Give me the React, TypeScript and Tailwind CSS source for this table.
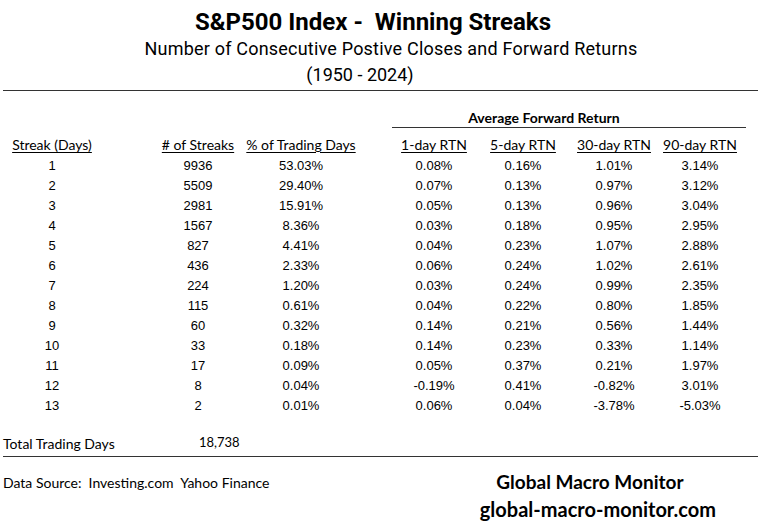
import React from 'react';

type Row = [string, string, string, string, string, string, string];

const rows: Row[] = [
  ['1', '9936', '53.03%', '0.08%', '0.16%', '1.01%', '3.14%'],
  ['2', '5509', '29.40%', '0.07%', '0.13%', '0.97%', '3.12%'],
  ['3', '2981', '15.91%', '0.05%', '0.13%', '0.96%', '3.04%'],
  ['4', '1567', '8.36%', '0.03%', '0.18%', '0.95%', '2.95%'],
  ['5', '827', '4.41%', '0.04%', '0.23%', '1.07%', '2.88%'],
  ['6', '436', '2.33%', '0.06%', '0.24%', '1.02%', '2.61%'],
  ['7', '224', '1.20%', '0.03%', '0.24%', '0.99%', '2.35%'],
  ['8', '115', '0.61%', '0.04%', '0.22%', '0.80%', '1.85%'],
  ['9', '60', '0.32%', '0.14%', '0.21%', '0.56%', '1.44%'],
  ['10', '33', '0.18%', '0.14%', '0.23%', '0.33%', '1.14%'],
  ['11', '17', '0.09%', '0.05%', '0.37%', '0.21%', '1.97%'],
  ['12', '8', '0.04%', '-0.19%', '0.41%', '-0.82%', '3.01%'],
  ['13', '2', '0.01%', '0.06%', '0.04%', '-3.78%', '-5.03%'],
];

const headers = [
  'Streak (Days)',
  '# of Streaks',
  '% of Trading Days',
  '1-day RTN',
  '5-day RTN',
  '30-day RTN',
  '90-day RTN',
];

// fixed widths so each column's centre lands where the sheet has it
const cellCls = [
  'w-[104px]',
  'ml-[46px] w-[96px]',
  'w-[110px]',
  'ml-[36px] w-[84px]',
  'w-[94px]',
  'w-[88px]',
  'w-[84px]',
];

const sans = "font-['Lato','Open_Sans',sans-serif]";
const arial = "font-['Liberation_Sans',Arial,sans-serif]";

function TableRow({ cells, header }: { cells: string[]; header?: boolean }) {
  return (
    <div className="flex h-[20px] items-center">
      {cells.map((c, i) => (
        <div key={i} className={`${cellCls[i]} text-center`}>
          {header ? (
            <span className={`${sans} text-[14px] underline underline-offset-2`}>{c}</span>
          ) : (
            <span className={`${arial} text-[13px]`}>{c}</span>
          )}
        </div>
      ))}
    </div>
  );
}

export default function App() {
  return (
    <div className="h-[524px] w-[774px] overflow-hidden bg-white text-black">
      <div className="pt-[7px]">
        <div className="pr-[28px] text-center font-['Roboto',sans-serif] text-[24px] font-bold leading-[30px]">
          S&amp;P500 Index -&nbsp; Winning Streaks
        </div>
        <div className="mt-[-1px] pl-[8px] text-center font-['Roboto',sans-serif] text-[18px] leading-[26px] tracking-[0.2px]">
          Number of Consecutive Postive Closes and Forward Returns
        </div>
        <div className="pr-[54px] text-center font-['Roboto',sans-serif] text-[18px] leading-[26px]">
          (1950 - 2024)
        </div>
      </div>

      <div className="mx-[3px] mt-[2px] w-[755px] border-t border-[#333]" />

      <div className="ml-[392px] mt-[17px] w-[354px]">
        <div className={`${sans} pr-[50px] text-center text-[14px] font-bold leading-[19px]`}>
          Average Forward Return
        </div>
        <div className="border-t border-[#333]" />
      </div>

      <div className="mt-[6px]">
        <TableRow cells={headers} header />
        {rows.map((r) => (
          <TableRow key={r[0]} cells={r} />
        ))}
      </div>

      <div className={`${sans} mt-[18px] flex h-[22px] items-center text-[14px]`}>
        <span className="ml-[3px] w-[196px]">Total Trading Days</span>
        <span className="text-[13px]">18,738</span>
      </div>

      <div className="mx-[3px] mt-[2px] w-[755px] border-t border-[#333]" />

      <div className="flex">
        <div className={`${sans} ml-[3px] mt-[15px] text-[14px] leading-[22px]`}>
          Data Source:&nbsp; Investing.com&nbsp; Yahoo Finance
        </div>
        <div className={`${sans} ml-auto mr-[58px] mt-[12px] flex flex-col items-center font-bold`}>
          <div className="pr-[16px] text-[19px] leading-[26px]">Global Macro Monitor</div>
          <div className="text-[20px] leading-[28px]">global-macro-monitor.com</div>
        </div>
      </div>
    </div>
  );
}
